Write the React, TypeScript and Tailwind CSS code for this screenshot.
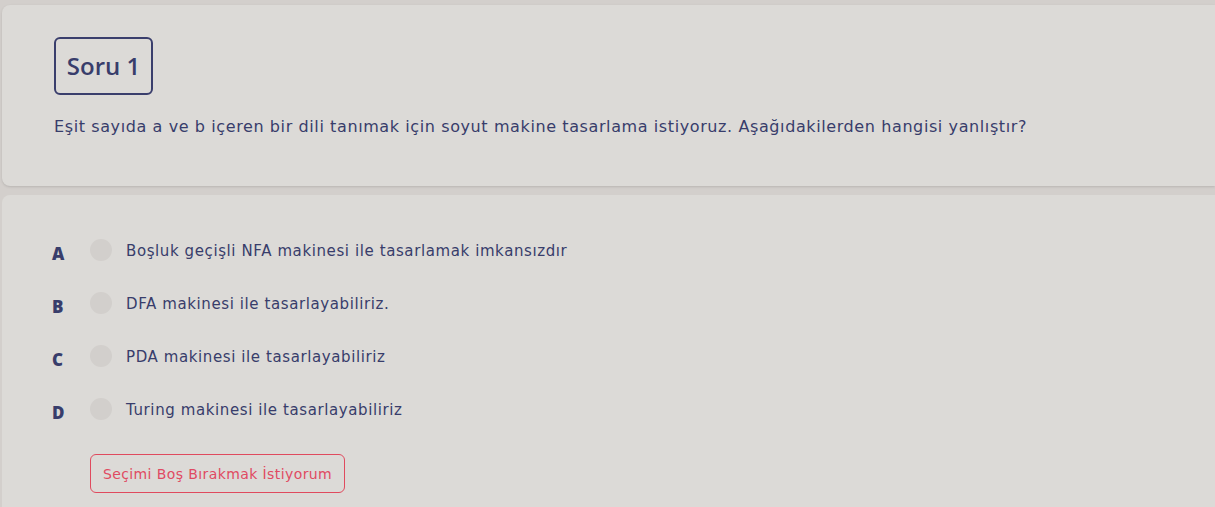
import React from "react";

const options = [
  { key: "A", text: "Boşluk geçişli NFA makinesi ile tasarlamak imkansızdır" },
  { key: "B", text: "DFA makinesi ile tasarlayabiliriz." },
  { key: "C", text: "PDA makinesi ile tasarlayabiliriz" },
  { key: "D", text: "Turing makinesi ile tasarlayabiliriz" },
];

const App: React.FC = () => {
  return (
    <div
      className="min-h-screen bg-[#d3cfcc] pt-[5px] pl-[2px] flex flex-col gap-[9px] text-[#383d6b]"
      style={{ fontFamily: '"DejaVu Sans", "Open Sans", sans-serif' }}
    >
      {/* Question card */}
      <div className="bg-[#dcdad7] rounded-l-lg pt-8 pb-[47px] pl-[52px] shadow-sm">
        <div className="inline-flex items-center justify-center w-[99px] h-[58px] border-2 border-[#3a3e6c] rounded-md">
          <span className="font-['Open_Sans',sans-serif] text-2xl font-semibold">Soru 1</span>
        </div>
        <p className="mt-5 text-base leading-6 tracking-[0.6px]">
          Eşit sayıda a ve b içeren bir dili tanımak için soyut makine tasarlama istiyoruz. Aşağıdakilerden hangisi yanlıştır?
        </p>
      </div>

      {/* Options card */}
      <div className="bg-[#dcdad7] rounded-tl-lg flex-1 pt-[44px] pl-[50px] pb-3">
        <div className="flex flex-col gap-[27px]">
          {options.map((o) => (
            <div key={o.key} className="flex items-start">
              <span className="w-[38px] mt-1 font-['Open_Sans',sans-serif] text-[17px] leading-[22px] font-extrabold">{o.key}</span>
              <span className="w-[22px] h-[22px] rounded-full bg-[#d2cfcc] shrink-0"></span>
              <span className="ml-[14px] text-[15px] leading-6 tracking-[0.6px]">{o.text}</span>
            </div>
          ))}
        </div>
        <button className="mt-[30px] ml-[38px] h-[39px] w-[255px] border border-[#e04a5e] rounded-md text-sm tracking-[0.4px] text-[#e04a62]">
          Seçimi Boş Bırakmak İstiyorum
        </button>
      </div>
    </div>
  );
};

export default App;
